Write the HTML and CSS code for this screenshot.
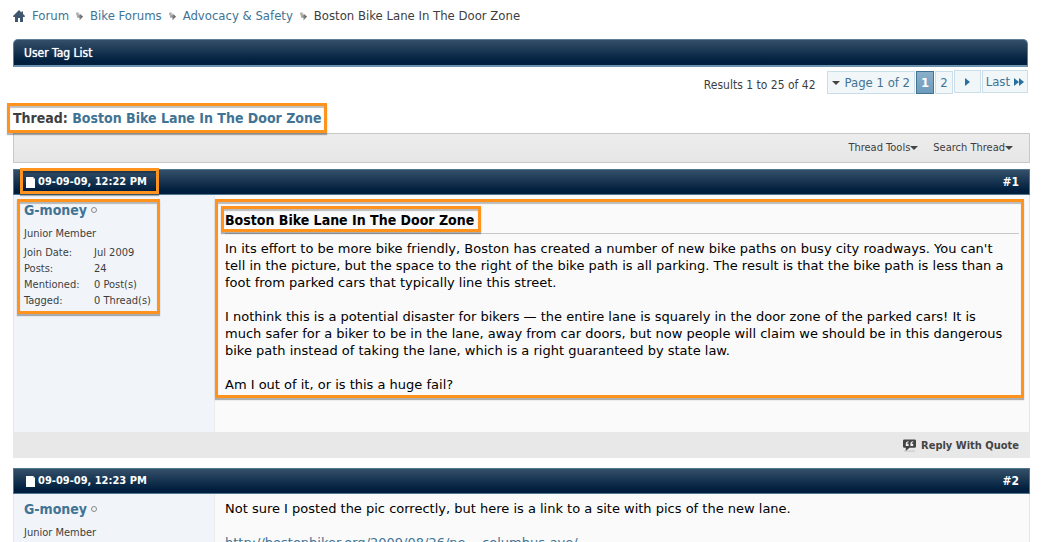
FILE: index.html
```
<!DOCTYPE html>
<html lang="en">
<head>
<meta charset="utf-8">
<title>Boston Bike Lane In The Door Zone</title>
<link rel="stylesheet" href="styles.css">
</head>
<body>
<svg class="defs" aria-hidden="true">
  <defs>
    <linearGradient id="arrowFill" x1="0" y1="0" x2="1" y2="0"><stop offset="0" stop-color="#c4c4c4"/><stop offset="1" stop-color="#555"/></linearGradient>
    <symbol id="crumb" viewBox="0 0 8 9"><path d="M0 0h3v3h1V1l4 3.500L4 9V6H1V3H0z" fill="url(#arrowFill)"/></symbol>
    <symbol id="doc" viewBox="0 0 9 11"><path d="M0 0h7l2 2v9H0z" fill="#fff"/><path d="M7 0v2h2z" fill="#c9d0d8"/></symbol>
  </defs>
</svg>
<div class="page">
  <nav class="crumbs" aria-label="Breadcrumb">
    <a href="#" aria-label="Home"><svg class="home" viewBox="0 0 12 12"><path d="M6 0l2.500 2.500V1.500h1.500V4l2 2-.5 1H10v5H7V8H5v4H2V7H.5L0 6z" fill="#3e576f"/></svg></a>
    <a href="#">Forum</a>
    <svg class="crumb-arrow"><use href="#crumb"/></svg>
    <a href="#">Bike Forums</a>
    <svg class="crumb-arrow"><use href="#crumb"/></svg>
    <a href="#">Advocacy &amp; Safety</a>
    <svg class="crumb-arrow"><use href="#crumb"/></svg>
    <span>Boston Bike Lane In The Door Zone</span>
  </nav>

  <h2 class="tag-bar">User Tag List</h2>

  <div class="pager">
    <span class="results">Results 1 to 25 of 42</span>
    <button type="button" class="page-box"><i class="caret"></i>Page 1 of 2</button>
    <a href="#" class="page-box current">1</a>
    <a href="#" class="page-box">2</a>
    <a href="#" class="page-box raised next" aria-label="Next page"><svg class="tri" viewBox="0 0 5 8"><path d="M0 0l5 4-5 4z"/></svg></a>
    <a href="#" class="page-box raised">Last<svg class="tri double" viewBox="0 0 10 8"><path d="M0 0l5 4-5 4zM5 0l5 4-5 4z"/></svg></a>
  </div>

  <h1 class="thread-title"><span class="mark mark-thread">Thread: <a href="#">Boston Bike Lane In The Door Zone</a></span></h1>

  <div class="toolbar">
    <button type="button">Thread Tools<i class="caret"></i></button>
    <button type="button">Search Thread<i class="caret"></i></button>
  </div>

  <article class="post">
    <header class="post-head">
      <span class="date mark mark-date"><svg class="doc"><use href="#doc"/></svg>09-09-09, 12:22 PM</span>
      <a href="#">#1</a>
    </header>
    <div class="post-main">
      <aside class="user">
        <div class="user-info mark mark-user">
          <a href="#" class="name">G-money</a><i class="offline"></i>
          <p class="rank">Junior Member</p>
          <dl class="stats">
            <dt>Join Date:</dt><dd>Jul 2009</dd>
            <dt>Posts:</dt><dd>24</dd>
            <dt>Mentioned:</dt><dd>0 Post(s)</dd>
            <dt>Tagged:</dt><dd>0 Thread(s)</dd>
          </dl>
        </div>
      </aside>
      <div class="content mark mark-content">
        <h2 class="post-title"><span class="mark mark-title">Boston Bike Lane In The Door Zone</span></h2>
        <p>In its effort to be more bike friendly, Boston has created a number of new bike paths on busy city roadways. You can't tell in the picture, but the space to the right of the bike path is all parking. The result is that the bike path is less than a foot from parked cars that typically line this street.</p>
        <p>I nothink this is a potential disaster for bikers — the entire lane is squarely in the door zone of the parked cars! It is much safer for a biker to be in the lane, away from car doors, but now people will claim we should be in this dangerous bike path instead of taking the lane, which is a right guaranteed by state law.</p>
        <p>Am I out of it, or is this a huge fail?</p>
      </div>
    </div>
    <footer class="post-foot">
      <a href="#"><svg class="quote" viewBox="0 0 14 13"><path d="M1 12h12v1H1z" fill="#c4c4c4"/><path d="M1.500 0h11Q14 0 14 1.500v6Q14 9 12.500 9H7l-4 3.500V9H1.500Q0 9 0 7.500v-6Q0 0 1.500 0z" fill="#444"/><path d="M6 2Q3 2 3 5v2h3V4.500H4.500Q4.500 3 6 3zM11 2Q8 2 8 5v2h3V4.500H9.500Q9.500 3 11 3z" fill="#eee"/></svg>Reply With Quote</a>
    </footer>
  </article>

  <article class="post">
    <header class="post-head">
      <span class="date"><svg class="doc"><use href="#doc"/></svg>09-09-09, 12:23 PM</span>
      <a href="#">#2</a>
    </header>
    <div class="post-main">
      <aside class="user">
        <div class="user-info">
          <a href="#" class="name">G-money</a><i class="offline"></i>
          <p class="rank">Junior Member</p>
        </div>
      </aside>
      <div class="content untitled">
        <p>Not sure I posted the pic correctly, but here is a link to a site with pics of the new lane.</p>
        <p><a href="#">http://bostonbiker.org/2009/08/26/ne... columbus-ave/</a></p>
      </div>
    </div>
  </article>
</div>
</body>
</html>
```

FILE: styles.css
```
* { box-sizing: border-box; }

body {
  margin: 0;
  height: 100vh;
  overflow: hidden;
  background: #fff;
  color: #3e3e3e;
  font: 13px/16px "DejaVu Sans Condensed", "Noto Sans", sans-serif;
}

h1, h2, p, dl, dd { margin: 0; }
a { color: #417394; text-decoration: none; }
button { font: inherit; cursor: pointer; }
svg { flex: none; }
.defs { position: absolute; width: 0; height: 0; }

.page { padding: 8px 20px 0 13px; }

.crumbs { display: flex; align-items: center; gap: 7px; height: 16px; }
.home { display: block; width: 12px; height: 12px; }
.crumb-arrow { width: 7px; height: 9px; }

.tag-bar {
  height: 28px;
  margin: 15px 2px 0 0;
  padding: 0 10px;
  border: 1px solid #5c7e97;
  border-bottom: 2px solid #6b93b0;
  border-radius: 5px 5px 0 0;
  background: linear-gradient(#344f69, #001f3e 85%);
  color: #fff;
  font-size: 12px;
  font-weight: normal;
  line-height: 27px;
  text-shadow: 0 0 1px #fff;
}

.pager { display: flex; gap: 1px; margin: 3px 2px 0 0; justify-content: flex-end; }
.results { margin: 7px 10px 0 0; font-size: 12px; }
.page-box {
  display: flex;
  align-items: center;
  height: 23px;
  margin-top: 1px;
  padding: 0 4px;
  border: 1px solid #cbdde9;
  background: #f1f6f9;
  color: #417394;
}
.raised { margin: 0 0 1px; padding: 0 3px; }
.next { padding: 0 10px; }
.current {
  border-color: #417394;
  background: linear-gradient(#8bafc9, #6e9bbb);
  color: #fff;
  font-weight: bold;
}
.tri { width: 5px; height: 8px; fill: #28709f; }
.double { width: 10px; margin-left: 4px; }

.caret {
  display: inline-block;
  border: 4px solid transparent;
  border-top-color: #444;
  border-bottom: 0;
}
.page-box .caret { margin-right: 5px; }

.thread-title {
  margin-top: 14px;
  color: #3e3e3e;
  font-size: 14px;
  line-height: 20px;
}

.toolbar {
  display: flex;
  justify-content: flex-end;
  gap: 15px;
  height: 30px;
  margin-top: 5px;
  padding: 0 16px;
  border: 1px solid #c8c8c8;
  background: linear-gradient(#ededed, #e6e6e6);
}
.toolbar button {
  display: flex;
  align-items: center;
  padding: 0;
  border: 0;
  background: none;
  color: #3e3e3e;
  font-size: 11px;
}

.post { margin: 6px 0 10px; }
.post-head {
  display: flex;
  justify-content: space-between;
  height: 26px;
  padding: 0 10px 0 12px;
  border: 1px solid #4f7790;
  background: linear-gradient(#344f69, #001f3e 85%);
  color: #fff;
  font-size: 12px;
  font-weight: bold;
  line-height: 24px;
}
.post-head a { color: #fff; }
.date { display: flex; align-items: center; gap: 3px; font-size: 11px; }
.doc { width: 9px; height: 11px; }

.post-main {
  display: grid;
  grid-template-columns: 201px 1fr;
  border: solid #e4e7e9;
  border-width: 0 1px;
  background: #fafafa;
}
.user { padding: 7px 10px; background: #f1f5f9; border-right: 1px solid #ececec; font-size: 11px; }
.user-info { width: 128px; }
.name { font-size: 14px; font-weight: bold; }
.offline {
  display: inline-block;
  width: 6px;
  height: 6px;
  margin: 0 0 2px 4px;
  border: 1px solid #888;
  border-radius: 50%;
}
.rank { margin-top: 6px; }
.stats { display: grid; grid-template-columns: 60px auto; column-gap: 10px; margin-top: 3px; }

.content {
  padding: 15px 10px 39px;
  color: #000;
  font: 13px/17px "DejaVu Sans", sans-serif;
}
.content p { padding-right: 10px; }
.content p + p { margin-top: 17px; }
.untitled { padding-top: 6px; }
.post-title {
  margin-bottom: 6px;
  padding-bottom: 3px;
  border-bottom: 1px solid #c8c8c8;
  font: bold 14px/20px "DejaVu Sans Condensed", "Noto Sans", sans-serif;
}

.post-foot {
  display: flex;
  justify-content: flex-end;
  height: 26px;
  padding: 1px 11px 0;
  background: #e8e8e8;
  font-size: 11px;
  font-weight: bold;
}
.post-foot a { display: flex; align-items: center; gap: 5px; color: #444; }
.quote { width: 13px; height: 13px; }

/* Orange callout frames drawn over the highlighted parts */
.mark { position: relative; }
.mark::after {
  content: "";
  position: absolute;
  border: 3px solid #ff931e;
  box-shadow: 0 2px 1px rgba(0, 0, 0, .3), inset 0 2px 1px rgba(0, 0, 0, .25);
  pointer-events: none;
}
.mark-thread::after { inset: -7px -6px -7px -6px; }
.mark-date::after { inset: -2px -12px 0 -6px; }
.mark-user::after { inset: -3px -8px -5px -7px; }
.mark-content::after { inset: 4px 5px 34px 0; }
.mark-title::after { inset: -6px -7px -4px -4px; }
```
